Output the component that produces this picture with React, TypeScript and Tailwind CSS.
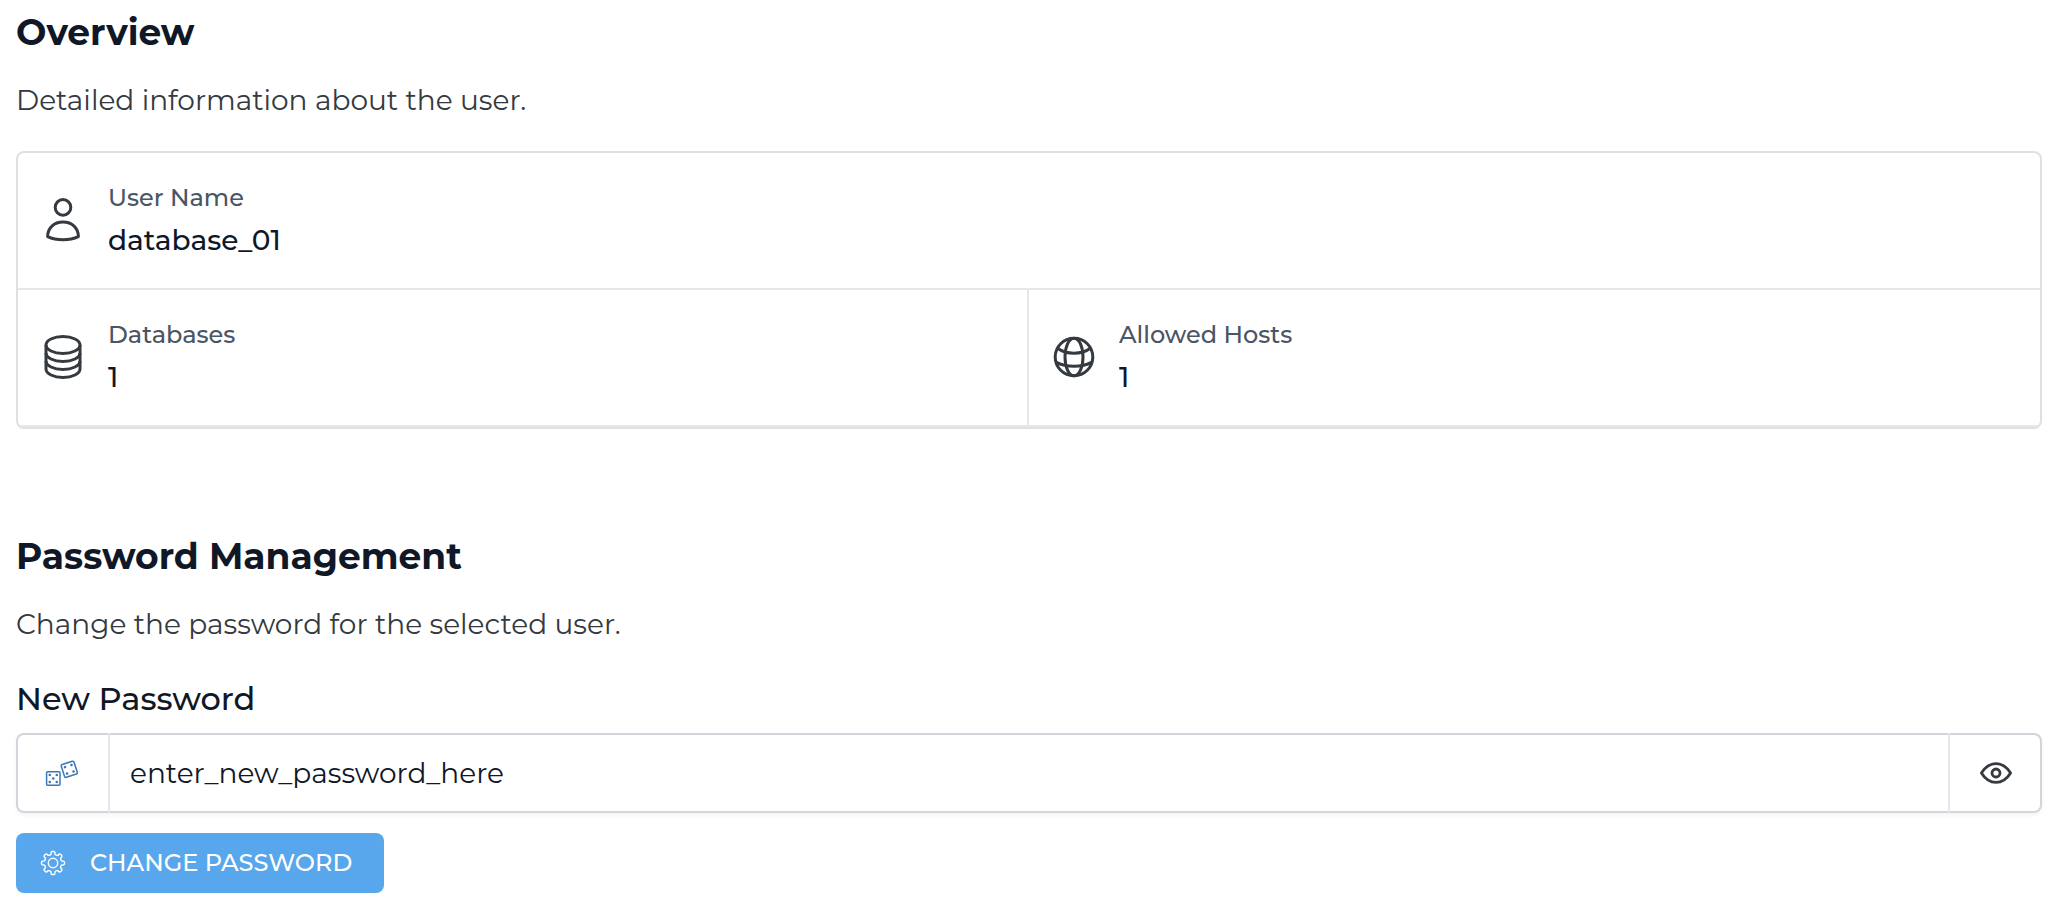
import type { ReactNode } from "react";

type IconProps = { className?: string };

function UserIcon({ className }: IconProps) {
  return (
    <svg className={className} viewBox="0 0 48 48" fill="none" stroke="currentColor" strokeWidth="3" strokeLinejoin="round" aria-hidden="true">
      <circle cx="24" cy="11.4" r="7.8" />
      <path d="M8.6 40.6C8.6 31.9 15 26 24 26S39.400 31.900 39.400 40.600C30.500 44.800 17.500 44.800 8.600 40.600Z" />
    </svg>
  );
}

function DatabaseIcon({ className }: IconProps) {
  return (
    <svg className={className} viewBox="0 0 48 48" fill="none" stroke="currentColor" strokeWidth="3" aria-hidden="true">
      <ellipse cx="24" cy="12" rx="17" ry="8.5" />
      <path d="M7 12V36C7 40.700 14.600 44.500 24 44.500S41 40.700 41 36V12" />
      <path d="M7 20C7 24.700 14.600 28.500 24 28.500S41 24.700 41 20" />
      <path d="M7 28C7 32.700 14.600 36.500 24 36.500S41 32.700 41 28" />
    </svg>
  );
}

function GlobeIcon({ className }: IconProps) {
  return (
    <svg className={className} viewBox="0 0 48 48" fill="none" stroke="currentColor" strokeWidth="3" aria-hidden="true">
      <circle cx="24" cy="24" r="18.8" />
      <ellipse cx="24" cy="24" rx="9" ry="18.8" />
      <path d="M7.600 15.300C16.500 21.900 31.500 21.900 40.400 15.300" />
      <path d="M6 29.100C16.500 34.700 31.500 34.700 42 29.100" />
    </svg>
  );
}

function DiceIcon({ className }: IconProps) {
  return (
    <svg className={className} viewBox="0 0 36 36" fill="none" aria-hidden="true">
      <g stroke="currentColor" strokeWidth="1.5">
        <rect x="1.6" y="16.8" width="13.4" height="13.4" rx="1" />
        <rect x="17.6" y="7.6" width="13.4" height="13.4" rx="1.4" transform="rotate(-18 24.3 14.3)" />
      </g>
      <g fill="currentColor">
        <circle cx="4.8" cy="20" r="1.3" />
        <circle cx="11.8" cy="20" r="1.3" />
        <circle cx="8.3" cy="23.5" r="1.3" />
        <circle cx="4.8" cy="27" r="1.3" />
        <circle cx="11.8" cy="27" r="1.3" />
        <g transform="rotate(-18 24.3 14.3)">
          <circle cx="20.9" cy="10.9" r="1.3" />
          <circle cx="27.7" cy="10.9" r="1.3" />
          <circle cx="20.9" cy="17.7" r="1.3" />
          <circle cx="27.7" cy="17.7" r="1.3" />
        </g>
      </g>
    </svg>
  );
}

function EyeIcon({ className }: IconProps) {
  return (
    <svg className={className} viewBox="0 0 36 36" fill="none" stroke="currentColor" strokeWidth="2.8" strokeLinejoin="round" aria-hidden="true">
      <path d="M4.400 18C8.400 11.600 13.400 8.600 19 8.600S29.600 11.600 33.600 18C29.600 24.400 24.600 27.400 19 27.400S8.400 24.400 4.400 18Z" />
      <circle cx="19" cy="18" r="4" />
    </svg>
  );
}

// Outline of a gear with eight rounded teeth, centred in a 26-unit box.
function gearPath(): string {
  const at = (radius: number, degrees: number) => {
    const a = (degrees * Math.PI) / 180;
    return `${(13 + radius * Math.sin(a)).toFixed(2)} ${(13 - radius * Math.cos(a)).toFixed(2)}`;
  };
  let d = `M${at(9, -13)}`;
  for (let i = 0; i < 8; i++) {
    const c = i * 45;
    d += `L${at(10.8, c - 10)}Q${at(11.5, c - 8)} ${at(11.5, c - 4)}L${at(11.5, c + 4)}Q${at(11.5, c + 8)} ${at(10.8, c + 10)}`;
    d += `L${at(9, c + 13)}Q${at(8, c + 22.5)} ${at(9, c + 32)}`;
  }
  return d + "Z";
}

function GearIcon({ className }: IconProps) {
  return (
    <svg className={className} viewBox="0 0 26 26" fill="none" stroke="currentColor" strokeWidth="1.4" strokeLinejoin="round" aria-hidden="true">
      <path d={gearPath()} />
      <circle cx="13" cy="13" r="4.7" />
    </svg>
  );
}

function SectionHeader({ title, text }: { title: string; text: string }) {
  return (
    <header className="flex flex-col gap-7">
      <h2 className="text-[36px] leading-10 font-bold text-gray-900">{title}</h2>
      <p className="text-[28px] leading-10 font-normal text-[#343a40]">{text}</p>
    </header>
  );
}

function Stat({ icon, label, value }: { icon: ReactNode; label: string; value: string }) {
  return (
    <div className="flex flex-1 items-center gap-[21px] px-[21px] pt-[27px] pb-7">
      <span className="shrink-0 text-[#343a40]">{icon}</span>
      <dl className="flex flex-col gap-1">
        <dt className="text-[24px] leading-9 font-medium text-gray-600">{label}</dt>
        <dd className="text-[28px] leading-10 font-medium text-gray-900">{value}</dd>
      </dl>
    </div>
  );
}

export default function App() {
  return (
    <main className="bg-white pt-3 pr-[18px] pb-4 pl-4 font-['Montserrat','Inter',sans-serif]">
      <section>
        <SectionHeader title="Overview" text="Detailed information about the user." />
        <div className="mt-[31px] overflow-hidden rounded-lg border-2 border-[#e0e0e0]">
          <div className="flex border-b-2 border-[#e5e7eb]">
            <Stat icon={<UserIcon className="size-12" />} label="User Name" value="database_01" />
          </div>
          <div className="grid grid-cols-2 border-b-2 border-[#e5e7eb]">
            <div className="flex border-r-2 border-[#e5e7eb]">
              <Stat icon={<DatabaseIcon className="size-12" />} label="Databases" value="1" />
            </div>
            <Stat icon={<GlobeIcon className="size-12" />} label="Allowed Hosts" value="1" />
          </div>
        </div>
      </section>

      <section className="mt-[107px]">
        <SectionHeader title="Password Management" text="Change the password for the selected user." />
        <form className="mt-[35px]" onSubmit={(event) => event.preventDefault()}>
          <label htmlFor="new-password" className="block text-[32px] leading-10 font-medium text-gray-900">
            New Password
          </label>
          <div className="mt-[14px] flex h-20 rounded-lg shadow-[0_2px_4px_rgba(0,0,0,0.05)]">
            <button
              type="button"
              aria-label="Generate password"
              className="flex w-[94px] shrink-0 items-center justify-center rounded-l-lg border-2 border-gray-300 border-r-gray-200 text-[#3b78b8]"
            >
              <DiceIcon className="size-9" />
            </button>
            <input
              id="new-password"
              type="text"
              defaultValue="enter_new_password_here"
              className="min-w-0 flex-1 border-y-2 border-gray-300 px-5 text-[28px] leading-10 text-gray-900 outline-none"
            />
            <button
              type="button"
              aria-label="Show password"
              className="flex w-[94px] shrink-0 items-center justify-center rounded-r-lg border-2 border-gray-300 border-l-gray-200 text-[#343a40]"
            >
              <EyeIcon className="size-9" />
            </button>
          </div>
          <button
            type="submit"
            className="mt-5 flex h-[60px] min-w-[368px] items-center gap-6 rounded-lg bg-[#58a6ec] px-6 text-[24px] leading-9 font-medium text-white uppercase"
          >
            <GearIcon className="size-[26px]" />
            Change Password
          </button>
        </form>
      </section>
    </main>
  );
}
